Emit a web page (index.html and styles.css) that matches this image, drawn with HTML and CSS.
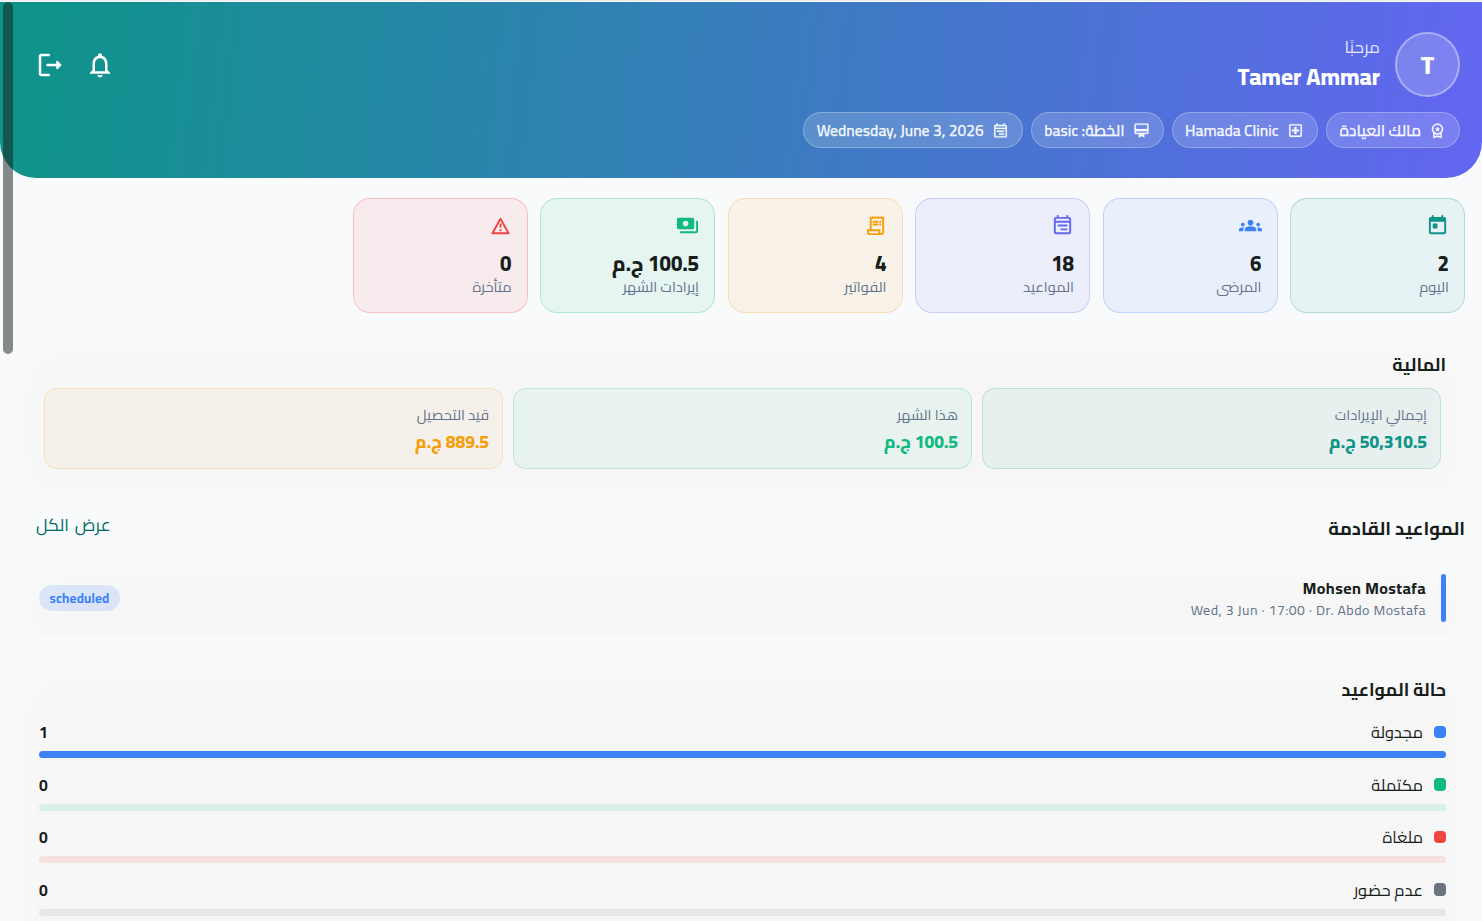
FILE: index.html
```html
<!DOCTYPE html>
<html lang="ar" dir="rtl">
    <head>
        <meta charset="UTF-8">
        <meta name="viewport" content="width=device-width, initial-scale=1.0">
        <title>لوحة العيادة</title>
        <link rel="stylesheet" href="styles.css">
    </head>
    <body>
        <div class="scrollbar"></div>

        <header class="header">
            <div class="top">
                <div class="avatar">T</div>
                <div class="hello">
                    <p class="greeting">مرحبًا</p>
                    <p class="username">Tamer Ammar</p>
                </div>
                <div class="actions">
                    <svg class="action" viewBox="0 0 24 24"><path d="M12 22c1.1 0 2-.9 2-2h-4c0 1.1.9 2 2 2zm6-6v-5c0-3.07-1.63-5.64-4.5-6.32V4c0-.83-.67-1.5-1.5-1.5s-1.5.67-1.5 1.5v.68C7.64 5.36 6 7.92 6 11v5l-2 2v1h16v-1l-2-2zm-2 1H8v-6c0-2.48 1.51-4.5 4-4.5s4 2.02 4 4.5v6z"/></svg>
                    <svg class="action" viewBox="0 0 24 24"><path d="M5 5h6c.55 0 1-.45 1-1s-.45-1-1-1H5c-1.1 0-2 .9-2 2v14c0 1.1.9 2 2 2h6c.55 0 1-.45 1-1s-.45-1-1-1H5V5z"/><path d="M21 11.65l-2.79-2.79c-.5-.5-1.21-.1-1.21.35V11h-7c-.55 0-1 .45-1 1s.45 1 1 1h7v1.79c0 .45.7.85 1.2.35L21 12.35c.2-.19.2-.51 0-.7z"/></svg>
                </div>
            </div>
            <div class="pills">
                <div class="pill role">
                    <svg viewBox="0 0 24 24"><path d="M9.68 13.69L12 11.93l2.31 1.76-.88-2.85L15.75 9h-2.84L12 6.19 11.09 9H8.25l2.31 1.84-.88 2.85zM20 10c0-4.42-3.58-8-8-8s-8 3.58-8 8c0 2.03.76 3.87 2 5.28V23l6-2 6 2v-7.72c1.24-1.41 2-3.25 2-5.28zm-8-6c3.31 0 6 2.69 6 6s-2.69 6-6 6-6-2.69-6-6 2.69-6 6-6zm0 15l-4 1.02v-3.1c1.18.68 2.54 1.08 4 1.08s2.82-.4 4-1.08v3.1L12 19z"/></svg>
                    <span>مالك العيادة</span>
                </div>
                <div class="pill clinic">
                    <svg viewBox="0 0 24 24"><path d="M19 3H5c-1.1 0-2 .9-2 2v14c0 1.1.9 2 2 2h14c1.1 0 2-.9 2-2V5c0-1.1-.9-2-2-2zm0 16H5V5h14v14zM10.5 17h3v-3.5H17v-3h-3.5V7h-3v3.5H7v3h3.5z"/></svg>
                    <span>Hamada Clinic</span>
                </div>
                <div class="pill plan">
                    <svg viewBox="0 0 24 24"><path d="M20 2H4c-1.11 0-2 .89-2 2v11c0 1.11.89 2 2 2h4v5l4-2 4 2v-5h4c1.11 0 2-.89 2-2V4c0-1.11-.89-2-2-2zm0 13H4v-2h16v2zm0-5H4V4h16v6z"/></svg>
                    <span>الخطة: basic</span>
                </div>
                <div class="pill date">
                    <svg class="flip" viewBox="0 0 24 24"><path d="M19 4h-1V2h-2v2H8V2H6v2H5c-1.11 0-1.99.9-1.99 2L3 20c0 1.1.89 2 2 2h14c1.1 0 2-.9 2-2V6c0-1.1-.9-2-2-2zm0 16H5V10h14v10zm0-12H5V6h14v2zM7 12h10v2H7zm0 4h7v2H7z"/></svg>
                    <span>Wednesday, June 3, 2026</span>
                </div>
            </div>
        </header>

        <main class="main">
            <div class="stats">
                <div class="stat teal">
                    <svg viewBox="0 0 24 24"><path d="M19 3h-1V2c0-.55-.45-1-1-1s-1 .45-1 1v1H8V2c0-.55-.45-1-1-1s-1 .45-1 1v1H5c-1.11 0-2 .9-2 2v14c0 1.1.89 2 2 2h14c1.1 0 2-.9 2-2V5c0-1.1-.9-2-2-2zm0 15c0 .55-.45 1-1 1H6c-.55 0-1-.45-1-1V8h14v10zM8 10h3c.55 0 1 .45 1 1v3c0 .55-.45 1-1 1H8c-.55 0-1-.45-1-1v-3c0-.55.45-1 1-1z"/></svg>
                    <p class="value">2</p>
                    <p class="label">اليوم</p>
                </div>
                <div class="stat blue">
                    <svg viewBox="0 0 24 24"><path d="M12 12.75c1.63 0 3.07.39 4.24.9 1.08.48 1.76 1.56 1.76 2.73V18H6v-1.61c0-1.18.68-2.26 1.76-2.73 1.17-.52 2.61-.91 4.24-.91zM4 13c1.1 0 2-.9 2-2s-.9-2-2-2-2 .9-2 2 .9 2 2 2zm1.13 1.1c-.37-.06-.74-.1-1.13-.1-.99 0-1.93.21-2.78.58C.48 14.9 0 15.62 0 16.43V18h4.5v-1.61c0-.83.23-1.61.63-2.29zM20 13c1.1 0 2-.9 2-2s-.9-2-2-2-2 .9-2 2 .9 2 2 2zm4 3.43c0-.81-.48-1.53-1.22-1.85-.85-.37-1.79-.58-2.78-.58-.39 0-.76.04-1.13.1.4.68.63 1.46.63 2.29V18H24v-1.57zM12 6c1.66 0 3 1.34 3 3s-1.34 3-3 3-3-1.34-3-3 1.34-3 3-3z"/></svg>
                    <p class="value">6</p>
                    <p class="label">المرضى</p>
                </div>
                <div class="stat indigo">
                    <svg class="flip" viewBox="0 0 24 24"><path d="M19 3h-1V2c0-.55-.45-1-1-1s-1 .45-1 1v1H8V2c0-.55-.45-1-1-1s-1 .45-1 1v1H5c-1.11 0-2 .9-2 2v14c0 1.1.89 2 2 2h14c1.1 0 2-.9 2-2V5c0-1.1-.9-2-2-2zm0 16H5V9h14v10zm0-12H5V5h14v2zM7 11h10v2H7zm0 4h7v2H7z"/></svg>
                    <p class="value">18</p>
                    <p class="label">المواعيد</p>
                </div>
                <div class="stat amber">
                    <svg viewBox="0 0 24 24"><path d="M19.5 3.5L18 2l-1.5 1.5L15 2l-1.5 1.5L12 2l-1.5 1.5L9 2 7.5 3.5 6 2v14H3v3c0 1.66 1.34 3 3 3h12c1.66 0 3-1.34 3-3V2l-1.5 1.5zM15 20H6c-.55 0-1-.45-1-1v-1h10v2zm4-1c0 .55-.45 1-1 1s-1-.45-1-1v-3H8V5h11v14z"/><path d="M9 7h6v2H9zM16 7h2v2h-2zM9 10h6v2H9zM16 10h2v2h-2z"/></svg>
                    <p class="value">4</p>
                    <p class="label">الفواتير</p>
                </div>
                <div class="stat green">
                    <svg viewBox="0 0 24 24"><path d="M19 14V6c0-1.1-.9-2-2-2H3c-1.1 0-2 .9-2 2v8c0 1.1.9 2 2 2h14c1.1 0 2-.9 2-2zm-9-1c-1.66 0-3-1.34-3-3s1.34-3 3-3 3 1.34 3 3-1.34 3-3 3zm13-5v10c0 1.1-.9 2-2 2H5c-.55 0-1-.45-1-1s.45-1 1-1h16V8c0-.55.45-1 1-1s1 .45 1 1z"/></svg>
                    <p class="value">100.5 ج.م</p>
                    <p class="label">إيرادات الشهر</p>
                </div>
                <div class="stat red">
                    <svg viewBox="0 0 24 24"><path class="line" d="M12 5L20.4 20H3.6z"/><path d="M11 10h2v4h-2zM11 16h2v2h-2z"/></svg>
                    <p class="value">0</p>
                    <p class="label">متأخرة</p>
                </div>
            </div>

            <section class="panel finance">
                <h2 class="title">المالية</h2>
                <div class="sums">
                    <div class="sum teal">
                        <p class="label">إجمالي الإيرادات</p>
                        <p class="amount">50,310.5 ج.م</p>
                    </div>
                    <div class="sum green">
                        <p class="label">هذا الشهر</p>
                        <p class="amount">100.5 ج.م</p>
                    </div>
                    <div class="sum amber">
                        <p class="label">قيد التحصيل</p>
                        <p class="amount">889.5 ج.م</p>
                    </div>
                </div>
            </section>

            <div class="heading">
                <h2 class="title">المواعيد القادمة</h2>
                <a class="more">عرض الكل</a>
            </div>

            <section class="panel visit">
                <div class="mark"></div>
                <div class="who">
                    <p class="name">Mohsen Mostafa</p>
                    <p class="when">Wed, 3 Jun · 17:00 · Dr. Abdo Mostafa</p>
                </div>
                <span class="badge">scheduled</span>
            </section>

            <section class="panel status">
                <h2 class="title">حالة المواعيد</h2>
                <div class="row blue">
                    <div class="line1"><i class="dot"></i><span class="state">مجدولة</span><b class="count">1</b></div>
                    <div class="track"><div class="fill" style="width: 100%"></div></div>
                </div>
                <div class="row green">
                    <div class="line1"><i class="dot"></i><span class="state">مكتملة</span><b class="count">0</b></div>
                    <div class="track"><div class="fill" style="width: 0%"></div></div>
                </div>
                <div class="row red">
                    <div class="line1"><i class="dot"></i><span class="state">ملغاة</span><b class="count">0</b></div>
                    <div class="track"><div class="fill" style="width: 0%"></div></div>
                </div>
                <div class="row gray">
                    <div class="line1"><i class="dot"></i><span class="state">عدم حضور</span><b class="count">0</b></div>
                    <div class="track"><div class="fill" style="width: 0%"></div></div>
                </div>
            </section>
        </main>
    </body>
</html>
```
FILE: styles.css
```css
*{
    box-sizing: border-box;
}
html{
    height: 100%;
    overflow: hidden;
}
body{
    margin: 0;
    height: 100%;
    overflow: hidden;
    position: relative;
    padding-top: 2px;
    background: linear-gradient(#eceef2 1.5px, #f9fafc 1.5px);
    font-family: Cairo, "Noto Sans", "DejaVu Sans", sans-serif;
    color: #171d1b;
}
p, h2{
    margin: 0;
    white-space: nowrap;
}
svg{
    display: block;
    fill: currentColor;
    flex: none;
}
.flip{
    transform: scaleX(-1);
}
.scrollbar{
    position: absolute;
    left: 2.5px;
    top: 2px;
    width: 10px;
    height: 352px;
    border-radius: 5px;
    background: rgba(23, 29, 27, .51);
    z-index: 2;
}

/* colour of each kind of card */
.teal{ --c: 13, 148, 136; }
.blue{ --c: 59, 130, 246; }
.indigo{ --c: 99, 102, 241; }
.amber{ --c: 245, 158, 11; }
.green{ --c: 16, 185, 129; }
.red{ --c: 239, 68, 68; }
.gray{ --c: 107, 114, 128; }

.header{
    height: 176px;
    padding: 30px 22px 0 35px;
    border-radius: 0 0 36px 36px;
    background: linear-gradient(96.8deg, #0d9488, #6366f1);
    color: #fff;
}
.top{
    display: flex;
    height: 65px;
}
.avatar{
    width: 65px;
    height: 65px;
    border-radius: 50%;
    border: 2px solid rgba(255, 255, 255, .35);
    background: rgba(255, 255, 255, .18);
    font-size: 26px;
    font-weight: 800;
    line-height: 62px;
    text-align: center;
}
.hello{
    margin-right: 15px;
}
.greeting{
    font-size: 17px;
    line-height: 26px;
    padding-top: 2px;
    color: rgba(255, 255, 255, .85);
}
.username{
    font-size: 23px;
    font-weight: 800;
    line-height: 34px;
}
.actions{
    display: flex;
    gap: 20px;
    align-items: center;
    margin-right: auto;
}
.action{
    width: 30px;
    height: 30px;
}
.pills{
    display: flex;
    gap: 8px;
    margin-top: 15px;
}
.pill{
    display: flex;
    align-items: center;
    gap: 8px;
    height: 36px;
    padding: 0 13px;
    border: 1px solid rgba(255, 255, 255, .25);
    border-radius: 18px;
    background: rgba(255, 255, 255, .16);
    font-size: 15.6px;
    font-weight: 600;
    -webkit-text-stroke: .25px;
    white-space: nowrap;
    color: rgba(255, 255, 255, .92);
}
.pill svg{
    width: 17px;
    height: 17px;
    stroke: currentColor;
    stroke-width: .3;
}
.role{ width: 134.4px; }
.clinic{ width: 146px; }
.plan{ width: 133px; }
.date{ width: 220px; }

.main{
    padding: 20px 17px 0 20px;
}
.stats{
    display: flex;
    gap: 12.5px;
}
.stat{
    width: 175px;
    height: 115px;
    padding: 15px 15px 0;
    border: 1px solid rgba(var(--c), .25);
    border-radius: 17px;
    background: rgba(var(--c), .08);
}
.stat svg{
    width: 23px;
    height: 23px;
    color: rgb(var(--c));
}
.stat .line{
    fill: none;
    stroke: currentColor;
    stroke-width: 2;
    stroke-linejoin: round;
}
.value{
    margin-top: 11px;
    font-size: 20.6px;
    font-weight: 800;
    line-height: 32px;
}
.label{
    font-size: 14.6px;
    line-height: 16px;
    color: #64748b;
}
.stat .label{
    margin-top: -1px;
}
.title{
    font-size: 17.8px;
    font-weight: 700;
    line-height: 26px;
}

.panel{
    border-radius: 26px;
    background: #f6f6f6;
    box-shadow: inset 0 12px 40px 4px #fafbfc;
}
.finance{
    height: 156px;
    margin-top: 21px;
    padding: 18px 19px 0;
}
.sums{
    display: flex;
    gap: 10px;
    margin-top: 10px;
    padding: 0 5px;
}
.sum{
    flex: 1;
    height: 81px;
    padding: 18px 13px 0;
    border: 1px solid rgba(var(--c), .2);
    border-radius: 13px;
    background: rgba(var(--c), .06);
}
.sum.amber{
    background: rgba(var(--c), .05);
}
.amount{
    margin-top: 3px;
    font-size: 17.5px;
    font-weight: 800;
    line-height: 32px;
    color: rgb(var(--c));
}

.heading{
    display: flex;
    justify-content: space-between;
    align-items: center;
    height: 69px;
    padding: 8px 0 0 16px;
}
.heading .title{
    font-size: 18.4px;
}
.more{
    font-size: 17.3px;
    font-weight: 400;
    word-spacing: 2px;
    line-height: 24px;
    margin-bottom: 8px;
    color: #006a60;
}

.visit{
    display: flex;
    align-items: center;
    height: 78px;
    padding: 0 19px;
}
.mark{
    width: 5px;
    height: 48px;
    border-radius: 3px;
    background: #3b82f6;
}
.who{
    margin-right: 15px;
    padding-top: 2px;
}
.name{
    font-size: 16px;
    font-weight: 700;
    letter-spacing: .45px;
    line-height: 22px;
}
.when{
    font-size: 14px;
    letter-spacing: .47px;
    line-height: 22px;
    color: #64748b;
}
.badge{
    width: 81px;
    height: 26px;
    margin-right: auto;
    border-radius: 13px;
    background: rgba(59, 130, 246, .15);
    font-size: 13.2px;
    font-weight: 750;
    letter-spacing: .2px;
    line-height: 27px;
    text-align: center;
    color: #3b82f6;
}

.status{
    height: 330px;
    margin-top: 21px;
    padding: 19px 19px 0;
}
.row{
    height: 52.5px;
}
.status .title{
    margin-bottom: 16px;
}
.line1{
    display: flex;
    align-items: center;
    height: 26px;
}
.dot{
    width: 12.5px;
    height: 12.5px;
    border-radius: 4px;
    background: rgb(var(--c));
}
.state{
    margin-right: 10.5px;
    font-size: 16.4px;
}
.count{
    margin-right: auto;
    font-size: 15.8px;
    font-weight: 700;
}
.track{
    height: 7px;
    margin-top: 6px;
    border-radius: 4px;
    background: rgba(var(--c), .12);
}
.fill{
    height: 7px;
    border-radius: 4px;
    background: rgb(var(--c));
}
```
